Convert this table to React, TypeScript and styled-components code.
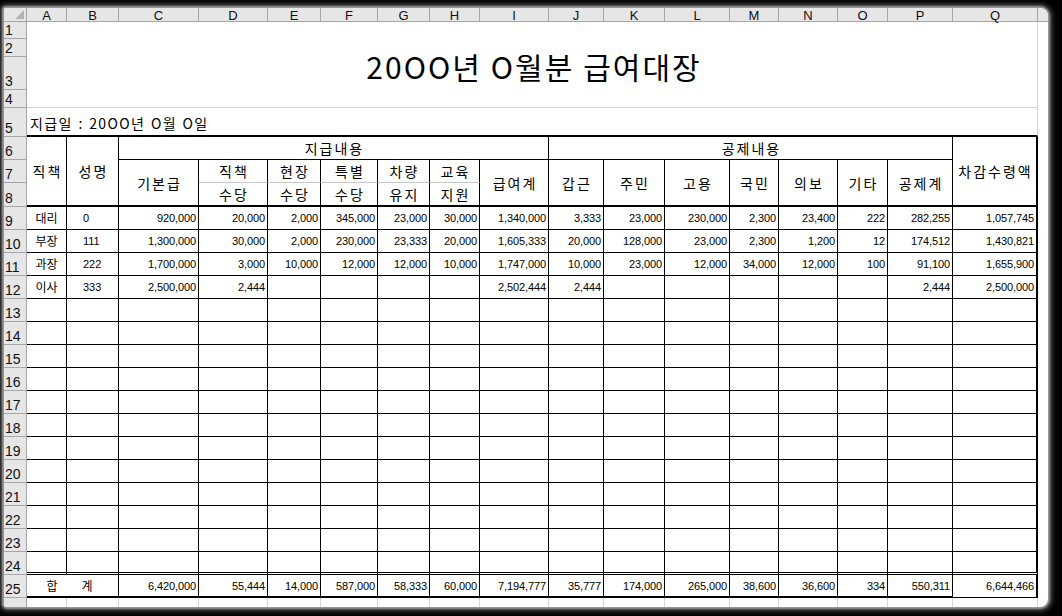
import React from "react";
import styled, { createGlobalStyle } from "styled-components";

const Global = createGlobalStyle`
  html, body { margin: 0; padding: 0; background: #000; }
  body { width: 1062px; height: 616px; overflow: hidden; }
`;

const COLS = [40, 52, 80, 69, 53, 57, 52, 50, 69, 55, 61, 65, 49, 59, 50, 65, 85];
const LETTERS = "ABCDEFGHIJKLMNOPQ".split("");
const COL_TEMPLATE = `23px ${COLS.map((c) => `${c}px`).join(" ")} 1fr`;
const ROW_TEMPLATE = `14px 17px 18px 33px 18px 29px 23px 23px 24px repeat(17, 23px) 1fr`;

const KO = `"Noto Sans CJK KR", "Liberation Sans", sans-serif`;
const NUM = `"Liberation Sans", "Noto Sans CJK KR", sans-serif`;
const HEAD_BG = "#e6e6e6";
const HEAD_LINE = "#a6a6a6";
const GRID = "#d4d4d4";

const Frame = styled.div`
  width: 1062px;
  height: 616px;
  background: #000;
  box-sizing: border-box;
  padding: 8px 0 0 4px;
  overflow: hidden;
`;

const Sheet = styled.div`
  width: 1044px;
  height: 599px;
  background: #fff;
  border-radius: 2px 8px 8px 3px;
  box-shadow: 0 0 2px 2px #9a9a9a, 0 0 5px 4px #4a4a4a;
  display: grid;
  grid-template-columns: ${COL_TEMPLATE};
  grid-template-rows: ${ROW_TEMPLATE};
  overflow: hidden;
`;

const Corner = styled.div`
  background: ${HEAD_BG};
  border-right: 1px solid ${HEAD_LINE};
  border-bottom: 1px solid ${HEAD_LINE};
  box-sizing: border-box;
  display: flex;
  align-items: flex-end;
  justify-content: flex-end;
  padding: 0 2px 2px 0;
`;

const ColHead = styled.div<{ $last?: boolean }>`
  background: ${HEAD_BG};
  border-right: ${(p) => (p.$last ? "none" : `1px solid ${HEAD_LINE}`)};
  border-bottom: 1px solid ${HEAD_LINE};
  box-sizing: border-box;
  display: flex;
  align-items: center;
  justify-content: center;
  font-family: ${NUM};
  font-size: 13px;
  line-height: 1;
  color: #111;
  padding-top: 1px;
`;

const RowHead = styled.div`
  grid-column: 1;
  background: ${HEAD_BG};
  border-right: 1px solid ${HEAD_LINE};
  border-bottom: 1px solid ${HEAD_LINE};
  box-sizing: border-box;
  display: flex;
  align-items: flex-end;
  padding: 0 0 1px 1px;
  font-family: ${NUM};
  font-size: 14px;
  line-height: 1;
  color: #111;
  overflow: hidden;
`;

const TitleCell = styled.div`
  grid-column: span 17;
  grid-row: span 4;
  border-right: 1px solid ${GRID};
  border-bottom: 1px solid ${GRID};
  box-sizing: border-box;
  display: flex;
  align-items: center;
  justify-content: center;
  padding: 3px 0 0 4px;
  font-family: ${KO};
  font-size: 30px;
  font-weight: 400;
  letter-spacing: 2px;
  color: #000;
`;

const TitleSpace = styled.span`
  display: inline-block;
  width: 9px;
`;

const DateCell = styled.div`
  grid-column: span 17;
  border-right: 1px solid ${GRID};
  border-bottom: 2px solid #000;
  box-sizing: border-box;
  display: flex;
  align-items: center;
  padding: 2px 0 0 3px;
  font-family: ${KO};
  font-size: 14px;
  letter-spacing: 1.4px;
  word-spacing: 1px;
  color: #000;
`;

type Edge = { $cs?: number; $rs?: number; $r?: string; $b?: string };

const Box = styled.div<Edge>`
  grid-column: span ${(p) => p.$cs ?? 1};
  grid-row: span ${(p) => p.$rs ?? 1};
  border-right: ${(p) => p.$r ?? "1px solid #000"};
  border-bottom: ${(p) => p.$b ?? "1px solid #000"};
  box-sizing: border-box;
  display: flex;
  align-items: center;
  color: #000;
  min-width: 0;
  overflow: hidden;
  white-space: nowrap;
`;

const HeadCell = styled(Box)`
  justify-content: center;
  font-family: ${KO};
  font-size: 14px;
  letter-spacing: 2px;
  padding-left: 2px;
  line-height: 1;
`;

const NameCell = styled(Box)`
  justify-content: center;
  font-family: ${KO};
  font-size: 12px;
  line-height: 1;
`;

const IdCell = styled(Box)`
  justify-content: flex-start;
  padding-left: 16px;
  font-family: ${NUM};
  font-size: 11px;
`;

const NumCell = styled(Box)`
  justify-content: flex-end;
  padding-right: 2px;
  font-family: ${NUM};
  font-size: 11px;
  letter-spacing: -0.1px;
`;

const TotalLabel = styled(Box)`
  justify-content: center;
  gap: 24px;
  padding-right: 6px;
  font-family: ${KO};
  font-size: 12px;
`;

const Tail = styled.div<{ $line?: boolean }>`
  border-right: ${(p) => (p.$line ? `1px solid ${GRID}` : "none")};
  box-sizing: border-box;
`;

const TailHead = styled(RowHead)`
  border-bottom: none;
`;

const SelectAll = () => (
  <svg width="9" height="9" viewBox="0 0 9 9">
    <polygon points="9,0 9,9 0,9" fill="#b4b4b4" />
  </svg>
);

const DATA: string[][] = [
  ["대리", "0", "920,000", "20,000", "2,000", "345,000", "23,000", "30,000", "1,340,000", "3,333", "23,000", "230,000", "2,300", "23,400", "222", "282,255", "1,057,745"],
  ["부장", "111", "1,300,000", "30,000", "2,000", "230,000", "23,333", "20,000", "1,605,333", "20,000", "128,000", "23,000", "2,300", "1,200", "12", "174,512", "1,430,821"],
  ["과장", "222", "1,700,000", "3,000", "10,000", "12,000", "12,000", "10,000", "1,747,000", "10,000", "23,000", "12,000", "34,000", "12,000", "100", "91,100", "1,655,900"],
  ["이사", "333", "2,500,000", "2,444", "", "", "", "", "2,502,444", "2,444", "", "", "", "", "", "2,444", "2,500,000"],
];
const EMPTY_ROWS = 12;
const ALL_ROWS: string[][] = [...DATA, ...Array.from({ length: EMPTY_ROWS }, () => Array(17).fill(""))];

const TOTAL = ["6,420,000", "55,444", "14,000", "587,000", "58,333", "60,000", "7,194,777", "35,777", "174,000", "265,000", "38,600", "36,600", "334", "550,311", "6,644,466"];

const THIN = "1px solid #000";
const THICK = "2px solid #000";
const SOFT = "1px solid #c8c8c8";
const DOUBLE = "3px double #000";

export default function App() {
  return (
    <>
      <Global />
      <Frame>
        <Sheet>
          <Corner>
            <SelectAll />
          </Corner>
          {LETTERS.map((l) => (
            <ColHead key={l}>{l}</ColHead>
          ))}
          <ColHead $last />

          <RowHead>1</RowHead>
          <TitleCell>
            20OO년<TitleSpace />O월분<TitleSpace />급여대장
          </TitleCell>
          <RowHead>2</RowHead>
          <RowHead>3</RowHead>
          <RowHead>4</RowHead>

          <RowHead>5</RowHead>
          <DateCell>지급일 : 20OO년 O월 O일</DateCell>

          <RowHead>6</RowHead>
          <HeadCell $rs={3} $b={THICK}>직책</HeadCell>
          <HeadCell $rs={3} $b={THICK}>성명</HeadCell>
          <HeadCell $cs={7}>지급내용</HeadCell>
          <HeadCell $cs={7}>공제내용</HeadCell>
          <HeadCell $rs={3} $r={THICK} $b={THICK}>차감수령액</HeadCell>

          <RowHead>7</RowHead>
          <HeadCell $rs={2} $b={THICK}>기본급</HeadCell>
          <HeadCell $b={SOFT}>직책</HeadCell>
          <HeadCell $b={SOFT}>현장</HeadCell>
          <HeadCell $b={SOFT}>특별</HeadCell>
          <HeadCell $b={SOFT}>차량</HeadCell>
          <HeadCell $b={SOFT}>교육</HeadCell>
          <HeadCell $rs={2} $b={THICK}>급여계</HeadCell>
          {["갑근", "주민", "고용", "국민", "의보", "기타", "공제계"].map((h) => (
            <HeadCell key={h} $rs={2} $b={THICK}>
              {h}
            </HeadCell>
          ))}

          <RowHead>8</RowHead>
          {["수당", "수당", "수당", "유지", "지원"].map((h, i) => (
            <HeadCell key={i} $b={THICK}>
              {h}
            </HeadCell>
          ))}

          {ALL_ROWS.map((row, ri) => {
            const last = ri === ALL_ROWS.length - 1;
            const b = last ? DOUBLE : THIN;
            return (
              <React.Fragment key={ri}>
                <RowHead>{ri + 9}</RowHead>
                <NameCell $b={b}>{row[0]}</NameCell>
                <IdCell $b={b}>{row[1]}</IdCell>
                {row.slice(2).map((v, ci) => (
                  <NumCell key={ci} $b={b} $r={ci === 14 ? THICK : THIN}>
                    {v}
                  </NumCell>
                ))}
              </React.Fragment>
            );
          })}

          <RowHead>25</RowHead>
          <TotalLabel $cs={2} $b={THICK}>
            <span>합</span>
            <span>계</span>
          </TotalLabel>
          {TOTAL.map((v, i) => (
            <NumCell key={i} $b={i === 14 ? THIN : THICK} $r={i === 14 ? THICK : THIN}>
              {v}
            </NumCell>
          ))}

          <TailHead />
          {LETTERS.map((l) => (
            <Tail key={l} $line />
          ))}
        </Sheet>
      </Frame>
    </>
  );
}
